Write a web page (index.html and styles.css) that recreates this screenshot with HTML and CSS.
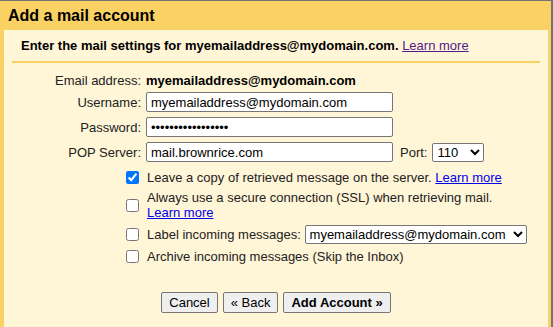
FILE: index.html
```html
<html lang="en">
	<head>
		<meta charset="utf-8" />
		<title>Add a mail account</title>
		<link rel="stylesheet" href="styles.css">
	</head>

	<body>
		<div class="dialog">
			<div class="title">Add a mail account</div>

			<div class="panel">
				<div class="intro">
					<b>Enter the mail settings for myemailaddress@mydomain.com.</b>
					<a class="visited" href="#">Learn more</a>
				</div>

				<div class="form">
					<div class="row row-email">
						<span class="label">Email address:</span>
						<b>myemailaddress@mydomain.com</b>
					</div>

					<div class="row row-field">
						<label class="label" for="username">Username:</label>
						<input class="text" id="username" type="text" value="myemailaddress@mydomain.com" />
					</div>

					<div class="row row-field">
						<label class="label" for="password">Password:</label>
						<input class="text" id="password" type="password" value="brownrice2024popx" />
					</div>

					<div class="row row-field">
						<label class="label" for="server">POP Server:</label>
						<div class="server">
							<input class="text" id="server" type="text" value="mail.brownrice.com" />
							<label for="port">Port:</label>
							<select class="port" id="port">
								<option>110</option>
								<option>995</option>
							</select>
						</div>
					</div>

					<div class="row row-check first">
						<input type="checkbox" id="leave" checked />
						<label for="leave">Leave a copy of retrieved message on the server. <a href="#">Learn more</a></label>
					</div>

					<div class="row row-check">
						<input type="checkbox" id="ssl" />
						<label for="ssl">Always use a secure connection (SSL) when retrieving mail.<br /><a href="#">Learn more</a></label>
					</div>

					<div class="row row-check">
						<input type="checkbox" id="labelin" />
						<div>
							<label for="labelin">Label incoming messages:</label>
							<select class="labels">
								<option>myemailaddress@mydomain.com</option>
							</select>
						</div>
					</div>

					<div class="row row-check">
						<input type="checkbox" id="archive" />
						<label for="archive">Archive incoming messages (Skip the Inbox)</label>
					</div>
				</div>

				<div class="buttons">
					<button type="button">Cancel</button>
					<button type="button">&laquo; Back</button>
					<button type="button" class="primary">Add Account &raquo;</button>
				</div>
			</div>
		</div>
	</body>
</html>
```

FILE: styles.css
```css
body {
	margin: 0;
	font-family: 'Liberation Sans', Arial, sans-serif;
	font-size: 13px;
	color: #222;
	background: #fad163;
}

a {
	color: #0000ee;
}

a.visited {
	color: #551a8b;
}

.dialog {
	height: 326px;
	border-top: 1px solid #737373;
	border-right: 2px solid #737373;
	background: #fad163;
	overflow: hidden;
}

.title {
	padding: 5px 8px 4px;
	font-size: 16px;
	line-height: 20px;
	font-weight: bold;
	color: #000;
}

.panel {
	margin: 0 3px 0 4px;
	height: 300px;
	background: #fff5d7;
}

.intro {
	margin: 0 8px;
	padding: 8px 9px 7px;
	line-height: 16px;
	border-bottom: 2px solid #fad163;
	color: #000;
}

.form {
	padding-top: 9px;
}

.row {
	display: grid;
	grid-template-columns: 137px 1fr;
	column-gap: 5px;
	align-items: center;
	line-height: 15px;
}

.row .label {
	text-align: right;
}

.row-email {
	height: 17px;
}

.row-email b {
	color: #000;
}

.row-field {
	margin-top: 5px;
	height: 20px;
}

.row-email + .row-field {
	margin-top: 3px;
}

.text {
	box-sizing: border-box;
	width: 247px;
	height: 20px;
	margin: 0;
	padding: 1px 4px;
	border: 1px solid #767676;
	border-radius: 2px;
	font-family: inherit;
	font-size: 13px;
	color: #000;
	background: #fff;
}

.server {
	display: flex;
	align-items: center;
}

.server label {
	margin: 0 5px 0 7px;
}

select {
	box-sizing: border-box;
	height: 19px;
	margin: 0;
	border: 1px solid #767676;
	border-radius: 2px;
	font-family: inherit;
	font-size: 13px;
	color: #000;
	background: #fff;
}

.port {
	width: 52px;
}

.labels {
	width: 222px;
}

.row-check {
	margin-top: 5px;
	padding-right: 8px;
}

.row-check.first {
	margin-top: 8px;
}

.row-check input {
	justify-self: end;
	width: 13px;
	height: 13px;
	margin: 0 2px 0 0;
}

.row-check label {
	padding-left: 1px;
}

.buttons {
	display: flex;
	justify-content: center;
	gap: 5px;
	margin-top: 28px;
}

.buttons button {
	height: 21px;
	padding: 1px 7px;
	border: 1px solid #767676;
	border-radius: 2px;
	background: #efefef;
	font-family: inherit;
	font-size: 13px;
	color: #000;
}

.buttons .primary {
	font-weight: bold;
}
```
